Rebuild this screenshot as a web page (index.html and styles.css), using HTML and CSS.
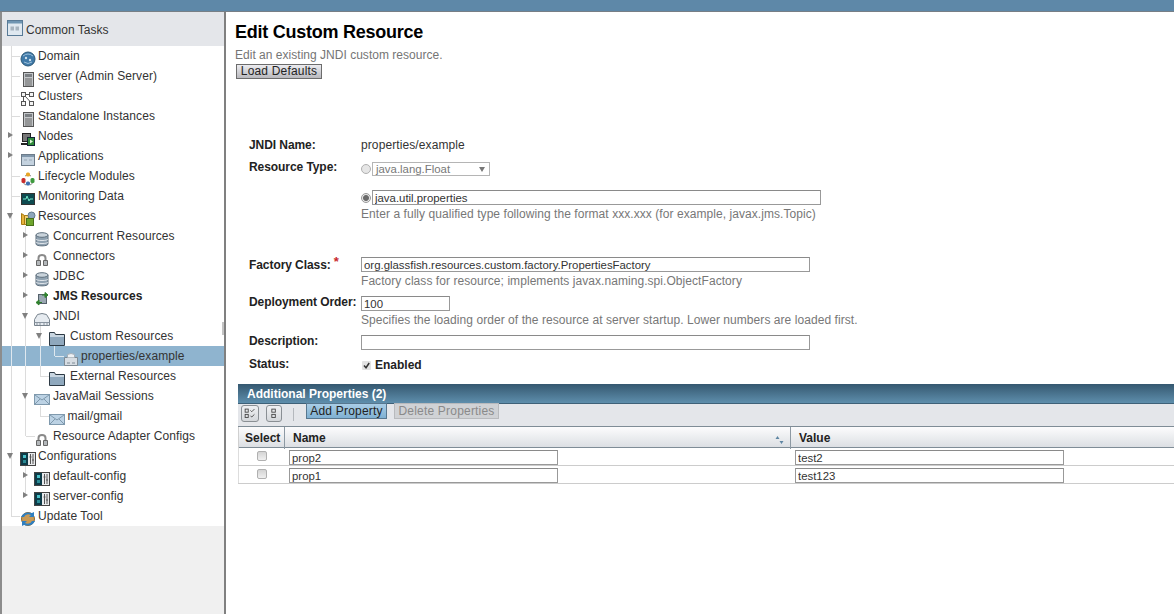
FILE: index.html
```html
<!DOCTYPE html>
<html lang="en">
<head>
<meta charset="utf-8">
<title>Edit Custom Resource</title>
<link rel="stylesheet" href="styles.css">
</head>
<body>
<svg class="defs" width="0" height="0" aria-hidden="true">
  <symbol id="i-globe" viewBox="0 0 16 16"><circle cx="8" cy="8" r="7" fill="#3f79a8" stroke="#2b5878"/><path d="M3 5q5-4 10 0M4 11q4 3 8 0" stroke="#9cc0da" fill="none"/><circle cx="6" cy="7" r="1.2" fill="#cfe0ec"/><circle cx="10" cy="9" r="1.2" fill="#cfe0ec"/></symbol>
  <symbol id="i-server" viewBox="0 0 16 16"><rect x="3.500" y="1.500" width="10" height="14" fill="#c4c7ca" stroke="#555"/><rect x="5" y="3" width="7" height="3" fill="#7c8084"/><path d="M5 8h7M5 10h7M5 12h7M5 14h7" stroke="#666"/></symbol>
  <symbol id="i-cluster" viewBox="0 0 16 16"><g fill="#f4f4f4" stroke="#555"><rect x="1.500" y="1.500" width="4" height="4"/><rect x="9.500" y="1.500" width="4" height="4"/><rect x="1.500" y="10.500" width="4" height="4"/><rect x="9.500" y="10.500" width="4" height="4"/></g><path d="M5 5l5.500 6M5.500 3.500h4M3.500 6v4" stroke="#555"/></symbol>
  <symbol id="i-node" viewBox="0 0 16 16"><rect x="2.500" y="2.500" width="8" height="8" fill="#777" stroke="#222"/><path d="M1 13h9" stroke="#222" stroke-width="2"/><rect x="7.500" y="6.500" width="7" height="8" fill="#2f8a3a" stroke="#123"/><path d="M10 8.500v4l3-2z" fill="#dff5d8"/></symbol>
  <symbol id="i-app" viewBox="0 0 16 16"><rect x="1.500" y="3.500" width="13" height="11" fill="#c4d2df" stroke="#6d7c8a"/><rect x="2" y="4" width="12" height="2" fill="#8197ab"/><path d="M4 9h3M9 9h3" stroke="#99a8b5"/></symbol>
  <symbol id="i-life" viewBox="0 0 16 16"><path d="M5 5q3-3 6 0M3 10q0 3 3 4M13 10q0 3-3 4" stroke="#888" fill="none"/><rect x="6" y="1.500" width="4" height="4" rx="1.500" fill="#e8a526"/><rect x="1.500" y="7" width="4" height="5" rx="1.500" fill="#c92d2d"/><rect x="10.500" y="7" width="4" height="5" rx="1.500" fill="#3e9a3e"/><rect x="6" y="10.500" width="4" height="4" rx="1.500" fill="#3c6fb0"/></symbol>
  <symbol id="i-mon" viewBox="0 0 16 16"><rect x="1.500" y="2.500" width="13" height="11" fill="#0e4a50" stroke="#333"/><path d="M3 8h3l1-3 2 5 1-2h3" stroke="#6fe8c8" fill="none"/></symbol>
  <symbol id="i-res" viewBox="0 0 16 16"><path d="M1.500 2.500l3 2v9h-3z" fill="#e7b33c" stroke="#a97b12"/><path d="M4.500 4.500h4v9h-4z" fill="#f0cf73" stroke="#a97b12"/><circle cx="11.500" cy="4.500" r="3.500" fill="#8ca6bc" stroke="#62798c"/><rect x="6.500" y="7.500" width="7" height="7" fill="#6ea52c" stroke="#47701a"/></symbol>
  <symbol id="i-db" viewBox="0 0 16 16"><path d="M2 4v9c0 2.500 12 2.500 12 0V4z" fill="#8fa1b0" stroke="#5e6f7d"/><ellipse cx="8" cy="4" rx="6" ry="2.300" fill="#c9d3db" stroke="#5e6f7d"/><path d="M2 8c0 2 12 2 12 0M2 11c0 2 12 2 12 0" stroke="#dfe5ea" fill="none"/></symbol>
  <symbol id="i-conn" viewBox="0 0 16 16"><path d="M4.500 9V7q0-3 3.500-3t3.500 3v2" fill="none" stroke="#8a8a8a" stroke-width="2"/><path d="M2.500 9.500h4v5h-4zM9.500 9.500h4v5h-4z" fill="#b4b8bb" stroke="#666"/></symbol>
  <symbol id="i-jms" viewBox="0 0 16 16"><rect x="4.500" y="3.500" width="8" height="9" fill="#9aa7b2" stroke="#55616b"/><path d="M8 4h5M11 1.500l3 2.500-3 2.500z" fill="#3a9a36" stroke="#2d7d2a"/><path d="M8 11.500H3M5 9l-3 2.500L5 14z" fill="#3a9a36" stroke="#2d7d2a"/></symbol>
  <symbol id="i-jndi" viewBox="0 0 16 16"><path d="M.5 14.500v-6l3-5q4.500-2 9 0l3 5v6z" fill="#e6ebf0" stroke="#77828c"/><path d="M.5 11.500h15M3 14v-2.500M6 14v-2.500M10 14v-2.500M13 14v-2.500" stroke="#8a95a0"/></symbol>
  <symbol id="i-folder" viewBox="0 0 16 16"><path d="M.5 14.500v-13h5l1 2h9v11z" fill="#c9d6e1" stroke="#2d3a45"/><path d="M1 14V6h14v8z" fill="#8fa8bd"/></symbol>
  <symbol id="i-doc" viewBox="0 0 16 16"><path d="M1.500 6.500h13v8h-13z" fill="#d7dde3" stroke="#7f8b95"/><path d="M4.500 6.500v-3q3.500-2 7 0v3" fill="#eef1f4" stroke="#a5afb8"/><path d="M4 12h3M9 12h3" stroke="#7f8b95"/></symbol>
  <symbol id="i-mail" viewBox="0 0 16 16"><rect x=".5" y="3.500" width="15" height="10" fill="#bcd2e4" stroke="#7f99ad"/><path d="M1 4l7 5 7-5M1 13l5-5M15 13l-5-5" stroke="#7f99ad" fill="none"/></symbol>
  <symbol id="i-conf" viewBox="0 0 16 16"><rect x=".5" y="1.500" width="15" height="13" fill="#e8eaec" stroke="#444"/><rect x="1" y="2" width="7" height="12" fill="#0d3b48"/><rect x="3" y="4" width="3" height="3" fill="#49c0c8"/><rect x="3" y="9" width="3" height="3" fill="#2a8a94"/><path d="M10.500 3v10M13 3v10M9.500 6h2M12 9h2" stroke="#555"/></symbol>
  <symbol id="i-update" viewBox="0 0 16 16"><circle cx="8" cy="8" r="6.500" fill="#c99a55" stroke="#8a6a35"/><path d="M1 6q3-6 11-4l2-1v5h-5l2-2q-5-2-7 2z" fill="#2f7fc0"/><path d="M15 10q-3 6-11 4l-2 1v-5h5l-2 2q5 2 7-2z" fill="#2f7fc0"/></symbol>
  <symbol id="i-tasks" viewBox="0 0 16 16"><rect x=".5" y=".5" width="15" height="15" fill="#dfe8f0" stroke="#587a96"/><rect x="1" y="1" width="14" height="2.500" fill="#6f95b2"/><rect x="3.500" y="6.500" width="3.500" height="4" fill="#a7b4bf"/><rect x="8.500" y="6.500" width="3.500" height="4" fill="#a7b4bf"/></symbol>
</svg>

<header class="topbar"></header>
<div class="shell">
  <nav class="side">
    <div class="side-head"><svg class="ico-tasks"><use href="#i-tasks"/></svg><span>Common Tasks</span></div>
    <ul class="tree">
      <li class="row"><span class="c el"></span><svg class="ico"><use href="#i-globe"/></svg><a class="t">Domain</a></li>
      <li class="row"><span class="c el"></span><svg class="ico"><use href="#i-server"/></svg><a class="t">server (Admin Server)</a></li>
      <li class="row"><span class="c el"></span><svg class="ico"><use href="#i-cluster"/></svg><a class="t">Clusters</a></li>
      <li class="row"><span class="c el"></span><svg class="ico"><use href="#i-server"/></svg><a class="t">Standalone Instances</a></li>
      <li class="row"><span class="c closed"></span><svg class="ico"><use href="#i-node"/></svg><a class="t">Nodes</a></li>
      <li class="row"><span class="c closed"></span><svg class="ico"><use href="#i-app"/></svg><a class="t">Applications</a></li>
      <li class="row"><span class="c el"></span><svg class="ico"><use href="#i-life"/></svg><a class="t">Lifecycle Modules</a></li>
      <li class="row"><span class="c el"></span><svg class="ico"><use href="#i-mon"/></svg><a class="t">Monitoring Data</a></li>
      <li class="row"><span class="c open"></span><svg class="ico"><use href="#i-res"/></svg><a class="t">Resources</a></li>
      <li class="row"><span class="c v"></span><span class="c closed"></span><svg class="ico"><use href="#i-db"/></svg><a class="t">Concurrent Resources</a></li>
      <li class="row"><span class="c v"></span><span class="c closed"></span><svg class="ico"><use href="#i-conn"/></svg><a class="t">Connectors</a></li>
      <li class="row"><span class="c v"></span><span class="c closed"></span><svg class="ico"><use href="#i-db"/></svg><a class="t">JDBC</a></li>
      <li class="row"><span class="c v"></span><span class="c closed"></span><svg class="ico"><use href="#i-jms"/></svg><a class="t strong">JMS Resources</a></li>
      <li class="row"><span class="c v"></span><span class="c open"></span><svg class="ico"><use href="#i-jndi"/></svg><a class="t">JNDI</a></li>
      <li class="row"><span class="c v"></span><span class="c v"></span><span class="c open"></span><svg class="ico"><use href="#i-folder"/></svg><a class="t wide">Custom Resources</a></li>
      <li class="row sel"><span class="c v"></span><span class="c v"></span><span class="c v"></span><span class="c el last"></span><svg class="ico"><use href="#i-doc"/></svg><a class="t">properties/example</a></li>
      <li class="row"><span class="c v"></span><span class="c v"></span><span class="c el last"></span><svg class="ico"><use href="#i-folder"/></svg><a class="t wide">External Resources</a></li>
      <li class="row"><span class="c v"></span><span class="c open"></span><svg class="ico"><use href="#i-mail"/></svg><a class="t">JavaMail Sessions</a></li>
      <li class="row"><span class="c v"></span><span class="c v"></span><span class="c el last"></span><svg class="ico"><use href="#i-mail"/></svg><a class="t">mail/gmail</a></li>
      <li class="row"><span class="c v"></span><span class="c el last"></span><svg class="ico"><use href="#i-conn"/></svg><a class="t">Resource Adapter Configs</a></li>
      <li class="row"><span class="c open"></span><svg class="ico"><use href="#i-conf"/></svg><a class="t">Configurations</a></li>
      <li class="row"><span class="c v"></span><span class="c closed"></span><svg class="ico"><use href="#i-conf"/></svg><a class="t">default-config</a></li>
      <li class="row"><span class="c v"></span><span class="c closed end"></span><svg class="ico"><use href="#i-conf"/></svg><a class="t">server-config</a></li>
      <li class="row"><span class="c el last"></span><svg class="ico"><use href="#i-update"/></svg><a class="t">Update Tool</a></li>
    </ul>
    <span class="grip"></span>
  </nav>

  <main class="main">
    <h1 class="title">Edit Custom Resource</h1>
    <p class="sub">Edit an existing JNDI custom resource.</p>
    <button class="btn-load" type="button">Load Defaults</button>

    <form class="form">
      <div class="f f-jndi"><label class="lbl">JNDI Name:</label><div class="val">properties/example</div></div>
      <div class="f f-type">
        <label class="lbl">Resource Type:</label>
        <div>
          <div class="radio-line first">
            <span class="radio"></span>
            <span class="select">java.lang.Float<i class="caret"></i></span>
          </div>
          <div class="radio-line second">
            <span class="radio on"></span>
            <input class="inp w-type" value="java.util.properties">
          </div>
          <div class="help">Enter a fully qualified type following the format xxx.xxx (for example, javax.jms.Topic)</div>
        </div>
      </div>
      <div class="f f-factory">
        <label class="lbl">Factory Class:<b class="req">*</b></label>
        <div><input class="inp w-long" value="org.glassfish.resources.custom.factory.PropertiesFactory"><div class="help">Factory class for resource; implements javax.naming.spi.ObjectFactory</div></div>
      </div>
      <div class="f f-order">
        <label class="lbl">Deployment Order:</label>
        <div><input class="inp w-short" value="100"><div class="help">Specifies the loading order of the resource at server startup. Lower numbers are loaded first.</div></div>
      </div>
      <div class="f f-desc"><label class="lbl">Description:</label><div><input class="inp w-long" value=""></div></div>
      <div class="f f-status"><label class="lbl">Status:</label><div class="check-line"><span class="check"><svg viewBox="0 0 9 9"><path d="M2 4.500l2 2.200 3.200-4.700" fill="none" stroke="#333" stroke-width="1.500"/></svg></span><b>Enabled</b></div></div>
    </form>

    <section class="table">
      <div class="t-title">Additional Properties (2)</div>
      <div class="t-tools">
        <span class="tool t1"><svg viewBox="0 0 18 17"><g fill="none" stroke="#444"><rect x="3.500" y="3.500" width="3.500" height="3.500"/><rect x="3.500" y="9.500" width="3.500" height="3.500"/><path d="M9.500 5l1.500 1.500 3-3M9.500 11l1.500 1.500 3-3"/></g></svg></span>
        <span class="tool t2"><svg viewBox="0 0 16 17"><g fill="none" stroke="#444"><rect x="5.500" y="3.500" width="4" height="3.500"/><rect x="5.500" y="9.500" width="4" height="3.500"/></g></svg></span>
        <span class="sep"></span>
        <button class="btn-add" type="button">Add Property</button>
        <button class="btn-del" type="button">Delete Properties</button>
      </div>
      <div class="t-head">
        <div class="h-sel">Select</div>
        <div class="h-name"><span>Name</span><svg class="sort" viewBox="0 0 9 8"><path d="M2.500 0l2 3h-4zM6.500 8l-2-3h4z" fill="#5f86a3"/></svg></div>
        <div class="h-val">Value</div>
      </div>
      <div class="t-row">
        <div class="d-sel"><span class="box"></span></div>
        <div class="d-name"><input class="inp w-cell" value="prop2"></div>
        <div class="d-val"><input class="inp w-cell" value="test2"></div>
      </div>
      <div class="t-row">
        <div class="d-sel"><span class="box"></span></div>
        <div class="d-name"><input class="inp w-cell" value="prop1"></div>
        <div class="d-val"><input class="inp w-cell" value="test123"></div>
      </div>
    </section>
  </main>
</div>
</body>
</html>
```

FILE: styles.css
```css
* { box-sizing: border-box; }
html, body { margin: 0; height: 100%; overflow: hidden; }
body { font: 12px/15px "Liberation Sans", Arial, sans-serif; color: #333; background: #fff; display: flex; flex-direction: column; }
.defs { position: absolute; }

.topbar { height: 12px; flex: none; background: #5e88a8; border-bottom: 1px solid #777f86; }
.shell { flex: 1; display: flex; min-height: 0; }

/* sidebar */
.side { width: 226px; flex: none; position: relative; background: #f0f0f0; border-left: 2px solid #8c8c8c; border-right: 2px solid #808080; }
.side-head { height: 34px; background: #e4e6ea; display: flex; align-items: center; padding: 2px 0 0 5px; gap: 3px; color: #333; }
.ico-tasks { width: 16px; height: 16px; position: relative; top: -2px; }
.tree { list-style: none; margin: 0; padding: 0; background: #fff; }
.row { height: 20px; display: flex; align-items: center; padding-left: 1px; white-space: nowrap; }
.row.sel { background: #8fb4cf; }
.c { width: 14.5px; height: 20px; flex: none; position: relative; }
.c::before { content: ""; position: absolute; left: 7.5px; top: 0; bottom: 0; border-left: 1px solid #dcdcdc; }
.c.last::before, .c.end::before { bottom: 10px; }
.el::after { content: ""; position: absolute; left: 8px; top: 10px; width: 9px; border-top: 1px solid #dcdcdc; }
.sel .c::before, .sel .c::after { border-color: #dfe8ef; }
.closed::after { content: ""; position: absolute; left: 5px; top: 6px; border: 3.500px solid transparent; border-left: 5px solid #808080; border-right: 0; }
.open::after { content: ""; position: absolute; left: 4px; top: 7px; border: 3.500px solid transparent; border-top: 6px solid #808080; border-bottom: 0; }
.ico { width: 16px; height: 16px; flex: none; margin-left: 2px; position: relative; top: 3px; }
.t { margin-left: 3px; color: #333; letter-spacing: .08px; }
.c:first-child + .ico + .t { margin-left: 2.500px; }
.sel .t { margin-left: 2px; }
.t.wide { margin-left: 5.500px; }
.t.strong { font-weight: bold; letter-spacing: 0; color: #222; }
.grip { position: absolute; right: 0; top: 310px; width: 2px; height: 13px; background: #c4c4c4; }

/* main */
.main { flex: 1; min-width: 0; padding: 9px 0 0 9px; color: #333; }
.title { margin: 0; font-size: 18px; line-height: 22px; font-weight: bold; color: #000; letter-spacing: -.25px; }
.sub { margin: 5px 0 0; color: #757575; letter-spacing: .02px; line-height: 15px; }
.btn-load { display: block; margin: 1px 0 0 1px; width: 86px; height: 15px; padding: 0; font: 12px/13px "Liberation Sans", Arial, sans-serif; letter-spacing: .18px; color: #222; background: linear-gradient(#ececf0, #b9b9be); border: 1px solid #6c6c6c; }

.form { padding: 57px 0 0 14px; }
.f { display: grid; grid-template-columns: 112px 1fr; }
.lbl { font-weight: bold; color: #222; white-space: nowrap; letter-spacing: -.07px; }
.val { letter-spacing: .1px; }
.f-jndi { height: 20px; align-items: center; }
.f-jndi .lbl, .f-jndi .val { margin-top: -1px; }
.f-type { margin-top: 3px; }
.f-type .lbl { padding-top: 1px; }
.f-factory { margin-top: 35px; }
.f-order { margin-top: 7px; }
.f-desc { margin-top: 7px; }
.f-status { margin-top: 7px; }
.f-order .lbl, .f-desc .lbl { margin-top: -1px; }
.req { color: #c8282c; margin-left: 3px; font-size: 13px; position: relative; top: -3px; }

.radio-line { display: flex; align-items: center; gap: 1px; height: 15px; }
.radio-line.first { margin-top: 2px; }
.radio-line.second { margin-top: 14px; }
.radio { width: 10px; height: 10px; border-radius: 50%; border: 1px solid #b0b0b0; background: #e6e6e6; flex: none; }
.radio.on { background: radial-gradient(circle, #6a6a6a 0 2.500px, #e8e8e8 3.500px); border-color: #999; }
.select { width: 118px; height: 14px; padding-left: 3px; border: 1px solid #b5b5b5; color: #777; font-size: 11.4px; line-height: 12px; position: relative; }
.caret { position: absolute; right: 4px; top: 4px; border: 3px solid transparent; border-top: 5px solid #777; border-bottom: 0; }
.inp { display: block; height: 15px; padding: 0 2px; font: 11.4px/13px "Liberation Sans", Arial, sans-serif; color: #333; background: #fff; border: 1px solid #999; border-top-color: #8a8a8a; border-radius: 0; outline: 0; }
.w-type { width: 449px; }
.w-long { width: 449px; }
.w-short { width: 89px; }
.w-cell { width: 269px; }
.help { margin-top: 2px; color: #777; letter-spacing: .06px; white-space: nowrap; }
.check-line { display: flex; align-items: center; height: 14px; padding: 2px 0 0 1px; gap: 4px; }
.check-line b { color: #222; }
.check { width: 9px; height: 9px; background: #e2e2e2; border-radius: 1px; display: block; }
.check svg { display: block; width: 9px; height: 9px; }

/* table */
.table { margin: 12px 0 0 3px; }
.t-title { height: 19px; padding-left: 9px; line-height: 20px; font-weight: bold; color: #fff; background: linear-gradient(#355870, #5e8eac); }
.t-tools { height: 24px; display: flex; align-items: flex-start; padding: 1px 0 0 3px; background: #e4e6ea; border-top: 1px solid #3e6178; border-bottom: 1px solid #7f8c96; }
.tool { height: 17px; display: block; border: 1px solid #8a8f94; border-radius: 3px; background: linear-gradient(#f0f1f3, #d4d7db); }
.tool svg { display: block; width: 100%; height: 100%; }
.t1 { width: 18px; }
.t2 { width: 16px; margin-left: 7px; }
.sep { width: 1px; height: 13px; margin: 3px 12px 0 11px; background: #b4b8bd; }
.btn-add, .btn-del { height: 16px; padding: 0; font: 12px/14px "Liberation Sans", Arial, sans-serif; letter-spacing: .2px; }
.btn-add { width: 81px; margin-top: -2px; color: #222; background: linear-gradient(#a9cde6, #7fb0d2); border: 1px solid #57778f; }
.btn-del { width: 105px; margin: -2px 0 0 7px; color: #8a8a8a; background: #d0d2d5; border: 1px solid #b8babd; }

.t-head, .t-row { display: grid; grid-template-columns: 46px 506px 1fr; }
.t-head { height: 21px; background: linear-gradient(#fcfcfd, #dcdfe3); border-bottom: 1px solid #7f8c96; font-weight: bold; color: #222; line-height: 22px; }
.h-sel { padding-left: 6px; border-left: 1px solid #d0d0d0; }
.h-name { padding: 0 6px 0 8px; border-left: 1px solid #8d99a3; display: flex; justify-content: space-between; align-items: center; }
.h-val { padding-left: 8px; border-left: 1px solid #8d99a3; }
.sort { width: 9px; height: 8px; margin-top: 3px; }
.t-row { height: 18px; border-bottom: 1px solid #ccc; }
.d-sel { display: flex; justify-content: center; padding-top: 3px; border-left: 1px solid #ddd; }
.box { width: 10px; height: 10px; border: 1px solid #b0b0b0; border-radius: 2px; background: linear-gradient(#d4d4d4, #f0f0f0); }
.d-name { padding: 2px 0 0 5px; }
.d-val { padding: 2px 0 0 5px; }
```
